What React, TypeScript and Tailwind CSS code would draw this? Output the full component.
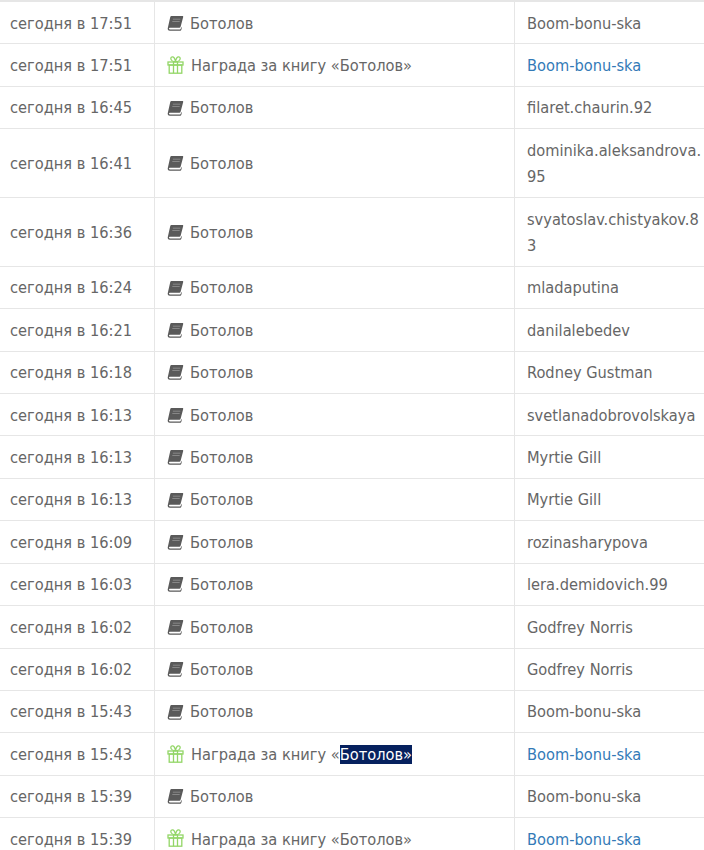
const Book = () => (
  <svg width="17" height="16" viewBox="0 0 17 16" className="mb-[2px] inline-block shrink-0">
    <path d="M4.4 1h11c.6 0 .9.4.8 1l-2.6 9.8c-.2.6-.5.9-1.1.9H3.3c-1 0-1.4.5-1.3 1 .1.4.4.7 1 .7h9.9c.5 0 .8-.2.9-.7l.3-1.2.8-.2-.5 2.2c-.2.8-.7 1.3-1.5 1.3H2.8C1.5 15.8.7 15 .7 13.8c0-.3 0-.6.1-.9L3.2 2.2C3.4 1.4 3.8 1 4.4 1z" fill="#5a5a5a" />
    <path d="M5.9 4.2h7.4M5.3 6.5h7.4" stroke="#fff" strokeWidth="0.9" opacity="0.3" />
  </svg>
);

const Gift = () => (
  <svg width="17" height="18" viewBox="0 0 17 18" fill="none" stroke="#93d667" strokeWidth="1.3" className="mb-[3px] inline-block shrink-0">
    <rect x="1" y="6" width="15" height="3" />
    <rect x="2.2" y="9" width="12.6" height="8.2" />
    <path d="M6.5 6V17.2M10.5 6V17.2" />
    <path d="M8.5 5.8C6.2 5.6 3.8 4.2 3.8 2.4 3.8.6 6.2.4 7.2 1.9 8 3.1 8.4 4.6 8.5 5.8zM8.5 5.8c2.3-.2 4.7-1.6 4.7-3.4 0-1.8-2.4-2-3.4-.5C9 3.1 8.6 4.6 8.5 5.8z" />
  </svg>
);

type Row = { t: string; gift?: boolean; sel?: boolean; u: string };
const rows: Row[] = [
  { t: "сегодня в 17:51", u: "Boom-bonu-ska" },
  { t: "сегодня в 17:51", gift: true, u: "Boom-bonu-ska" },
  { t: "сегодня в 16:45", u: "filaret.chaurin.92" },
  { t: "сегодня в 16:41", u: "dominika.aleksandrova.95" },
  { t: "сегодня в 16:36", u: "svyatoslav.chistyakov.83" },
  { t: "сегодня в 16:24", u: "mladaputina" },
  { t: "сегодня в 16:21", u: "danilalebedev" },
  { t: "сегодня в 16:18", u: "Rodney Gustman" },
  { t: "сегодня в 16:13", u: "svetlanadobrovolskaya" },
  { t: "сегодня в 16:13", u: "Myrtie Gill" },
  { t: "сегодня в 16:13", u: "Myrtie Gill" },
  { t: "сегодня в 16:09", u: "rozinasharypova" },
  { t: "сегодня в 16:03", u: "lera.demidovich.99" },
  { t: "сегодня в 16:02", u: "Godfrey Norris" },
  { t: "сегодня в 16:02", u: "Godfrey Norris" },
  { t: "сегодня в 15:43", u: "Boom-bonu-ska" },
  { t: "сегодня в 15:43", gift: true, sel: true, u: "Boom-bonu-ska" },
  { t: "сегодня в 15:39", u: "Boom-bonu-ska" },
  { t: "сегодня в 15:39", gift: true, u: "Boom-bonu-ska" },
];

export default function App() {
  return (
    <div className="h-[850px] w-[704px] overflow-hidden bg-white font-['DejaVu_Sans_Condensed','DejaVu_Sans',sans-serif] text-[16.25px] leading-[26.4px] text-[#666]">
      <div className="border-t-2 border-[#e6e6e6]">
        {rows.map((r, i) => (
          <div key={i} className="grid grid-cols-[155px_360px_189px] border-b border-[#e6e6e6]">
            <div className="flex items-center border-r border-[#e6e6e6] pb-[6.5px] pl-[10px] pr-[10px] pt-[8.5px]">{r.t}</div>
            <div className="flex items-center border-r border-[#e6e6e6] pb-[6.5px] pl-[12px] pr-[12px] pt-[8.5px]">
              {r.gift ? (
                <>
                  <Gift />
                  <span className="ml-[7px]">
                    Награда за книгу «{r.sel ? <span className="bg-[#06215e] text-white">Ботолов»</span> : "Ботолов»"}
                  </span>
                </>
              ) : (
                <>
                  <Book />
                  <span className="ml-[6px]">Ботолов</span>
                </>
              )}
            </div>
            <div className={`break-all pb-[6.5px] pl-[12px] pt-[8.5px] ${r.gift ? "text-[#337ab7]" : ""}`}>{r.u}</div>
          </div>
        ))}
      </div>
    </div>
  );
}
